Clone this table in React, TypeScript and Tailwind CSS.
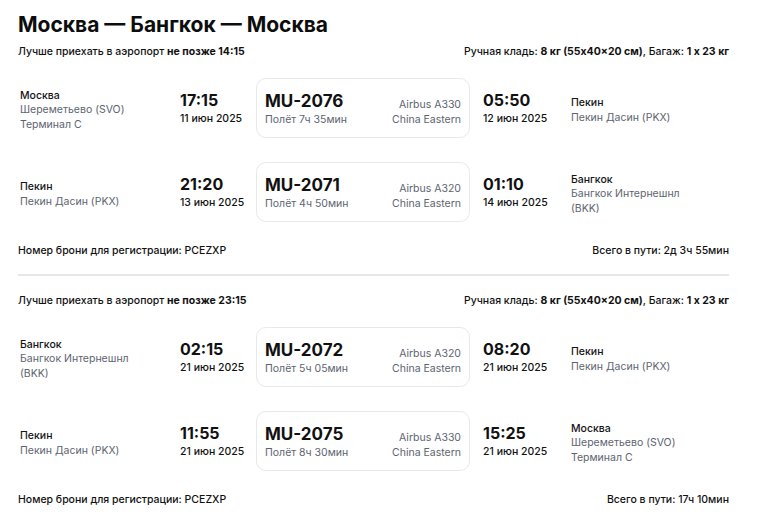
import React from "react";

type Place = { city: string; lines: string[] };
type Segment = {
  from: Place;
  depTime: string;
  depDate: string;
  flight: string;
  duration: string;
  aircraft: string;
  airline: string;
  arrTime: string;
  arrDate: string;
  to: Place;
};

type Trip = {
  arriveBy: string;
  segments: Segment[];
  booking: string;
  total: string;
};

const SVO: Place = { city: "Москва", lines: ["Шереметьево (SVO)", "Терминал C"] };
const PKX: Place = { city: "Пекин", lines: ["Пекин Дасин (PKX)"] };
const BKK: Place = { city: "Бангкок", lines: ["Бангкок Интернешнл", "(BKK)"] };

const trips: Trip[] = [
  {
    arriveBy: "14:15",
    booking: "PCEZXP",
    total: "2д 3ч 55мин",
    segments: [
      {
        from: SVO,
        depTime: "17:15",
        depDate: "11 июн 2025",
        flight: "MU-2076",
        duration: "Полёт 7ч 35мин",
        aircraft: "Airbus A330",
        airline: "China Eastern",
        arrTime: "05:50",
        arrDate: "12 июн 2025",
        to: PKX,
      },
      {
        from: PKX,
        depTime: "21:20",
        depDate: "13 июн 2025",
        flight: "MU-2071",
        duration: "Полёт 4ч 50мин",
        aircraft: "Airbus A320",
        airline: "China Eastern",
        arrTime: "01:10",
        arrDate: "14 июн 2025",
        to: BKK,
      },
    ],
  },
  {
    arriveBy: "23:15",
    booking: "PCEZXP",
    total: "17ч 10мин",
    segments: [
      {
        from: BKK,
        depTime: "02:15",
        depDate: "21 июн 2025",
        flight: "MU-2072",
        duration: "Полёт 5ч 05мин",
        aircraft: "Airbus A320",
        airline: "China Eastern",
        arrTime: "08:20",
        arrDate: "21 июн 2025",
        to: PKX,
      },
      {
        from: PKX,
        depTime: "11:55",
        depDate: "21 июн 2025",
        flight: "MU-2075",
        duration: "Полёт 8ч 30мин",
        aircraft: "Airbus A330",
        airline: "China Eastern",
        arrTime: "15:25",
        arrDate: "21 июн 2025",
        to: SVO,
      },
    ],
  },
];

const PlaceBlock = ({ place }: { place: Place }) => (
  <div className="pt-[5px] text-[10.5px] leading-[14.5px]">
    <div className="font-medium text-[#141414]">{place.city}</div>
    {place.lines.map((l) => (
      <div key={l} className="text-[#5d6470]">
        {l}
      </div>
    ))}
  </div>
);

const TimeBlock = ({ time, date }: { time: string; date: string }) => (
  <div className="text-[#111]">
    <div className="text-[16px] leading-[20px] font-bold">{time}</div>
    <div className="text-[10.5px] leading-[14px] font-medium mt-[2px]">{date}</div>
  </div>
);

const SegmentRow = ({ s }: { s: Segment }) => (
  <div className="flex items-center pl-[2px]">
    <div className="w-[160px] shrink-0">
      <PlaceBlock place={s.from} />
    </div>
    <div className="w-[76px] shrink-0">
      <TimeBlock time={s.depTime} date={s.depDate} />
    </div>
    <div className="w-[214px] h-[60px] shrink-0 rounded-[10px] border border-[#e6e8ec] px-[8px] flex items-end justify-between pb-[10px]">
      <div>
        <div className="text-[17px] leading-[22px] font-bold text-[#111]">{s.flight}</div>
        <div className="text-[10.5px] leading-[15px] text-[#5d6470]">{s.duration}</div>
      </div>
      <div className="text-right text-[10.5px] leading-[15px] text-[#5d6470]">
        <div>{s.aircraft}</div>
        <div>{s.airline}</div>
      </div>
    </div>
    <div className="w-[88px] shrink-0 pl-[13px] box-content">
      <TimeBlock time={s.arrTime} date={s.arrDate} />
    </div>
    <div className="flex-1">
      <PlaceBlock place={s.to} />
    </div>
  </div>
);

const TripBlock = ({ trip }: { trip: Trip }) => (
  <div>
    <div className="flex justify-between text-[10.5px] leading-[14px] text-[#111] font-medium">
      <div>
        Лучше приехать в аэропорт <span className="font-bold">не позже {trip.arriveBy}</span>
      </div>
      <div>
        Ручная кладь: <span className="font-bold">8 кг (55x40×20 см)</span>, Багаж:{" "}
        <span className="font-bold">1 x 23 кг</span>
      </div>
    </div>
    <div className="flex flex-col gap-[24px] mt-[19px]">
      {trip.segments.map((s) => (
        <SegmentRow key={s.flight} s={s} />
      ))}
    </div>
    <div className="flex justify-between text-[10.5px] leading-[14px] text-[#111] font-medium mt-[22px]">
      <div>Номер брони для регистрации: {trip.booking}</div>
      <div>Всего в пути: {trip.total}</div>
    </div>
  </div>
);

export default function App() {
  return (
    <div
      className="w-[757px] h-[517px] bg-white overflow-hidden px-[18px] pt-[11px]"
      style={{ fontFamily: "Inter, 'Noto Sans', sans-serif" }}
    >
      <div className="w-[711px]">
        <h1 className="text-[21px] leading-[28px] font-bold text-[#0d0d0d]">
          Москва — Бангкок — Москва
        </h1>
        <div className="mt-[6px]">
          <TripBlock trip={trips[0]} />
        </div>
        <div className="h-[2px] bg-[#e5e7eb] mt-[16px] mb-[18px]" />
        <TripBlock trip={trips[1]} />
      </div>
    </div>
  );
}
